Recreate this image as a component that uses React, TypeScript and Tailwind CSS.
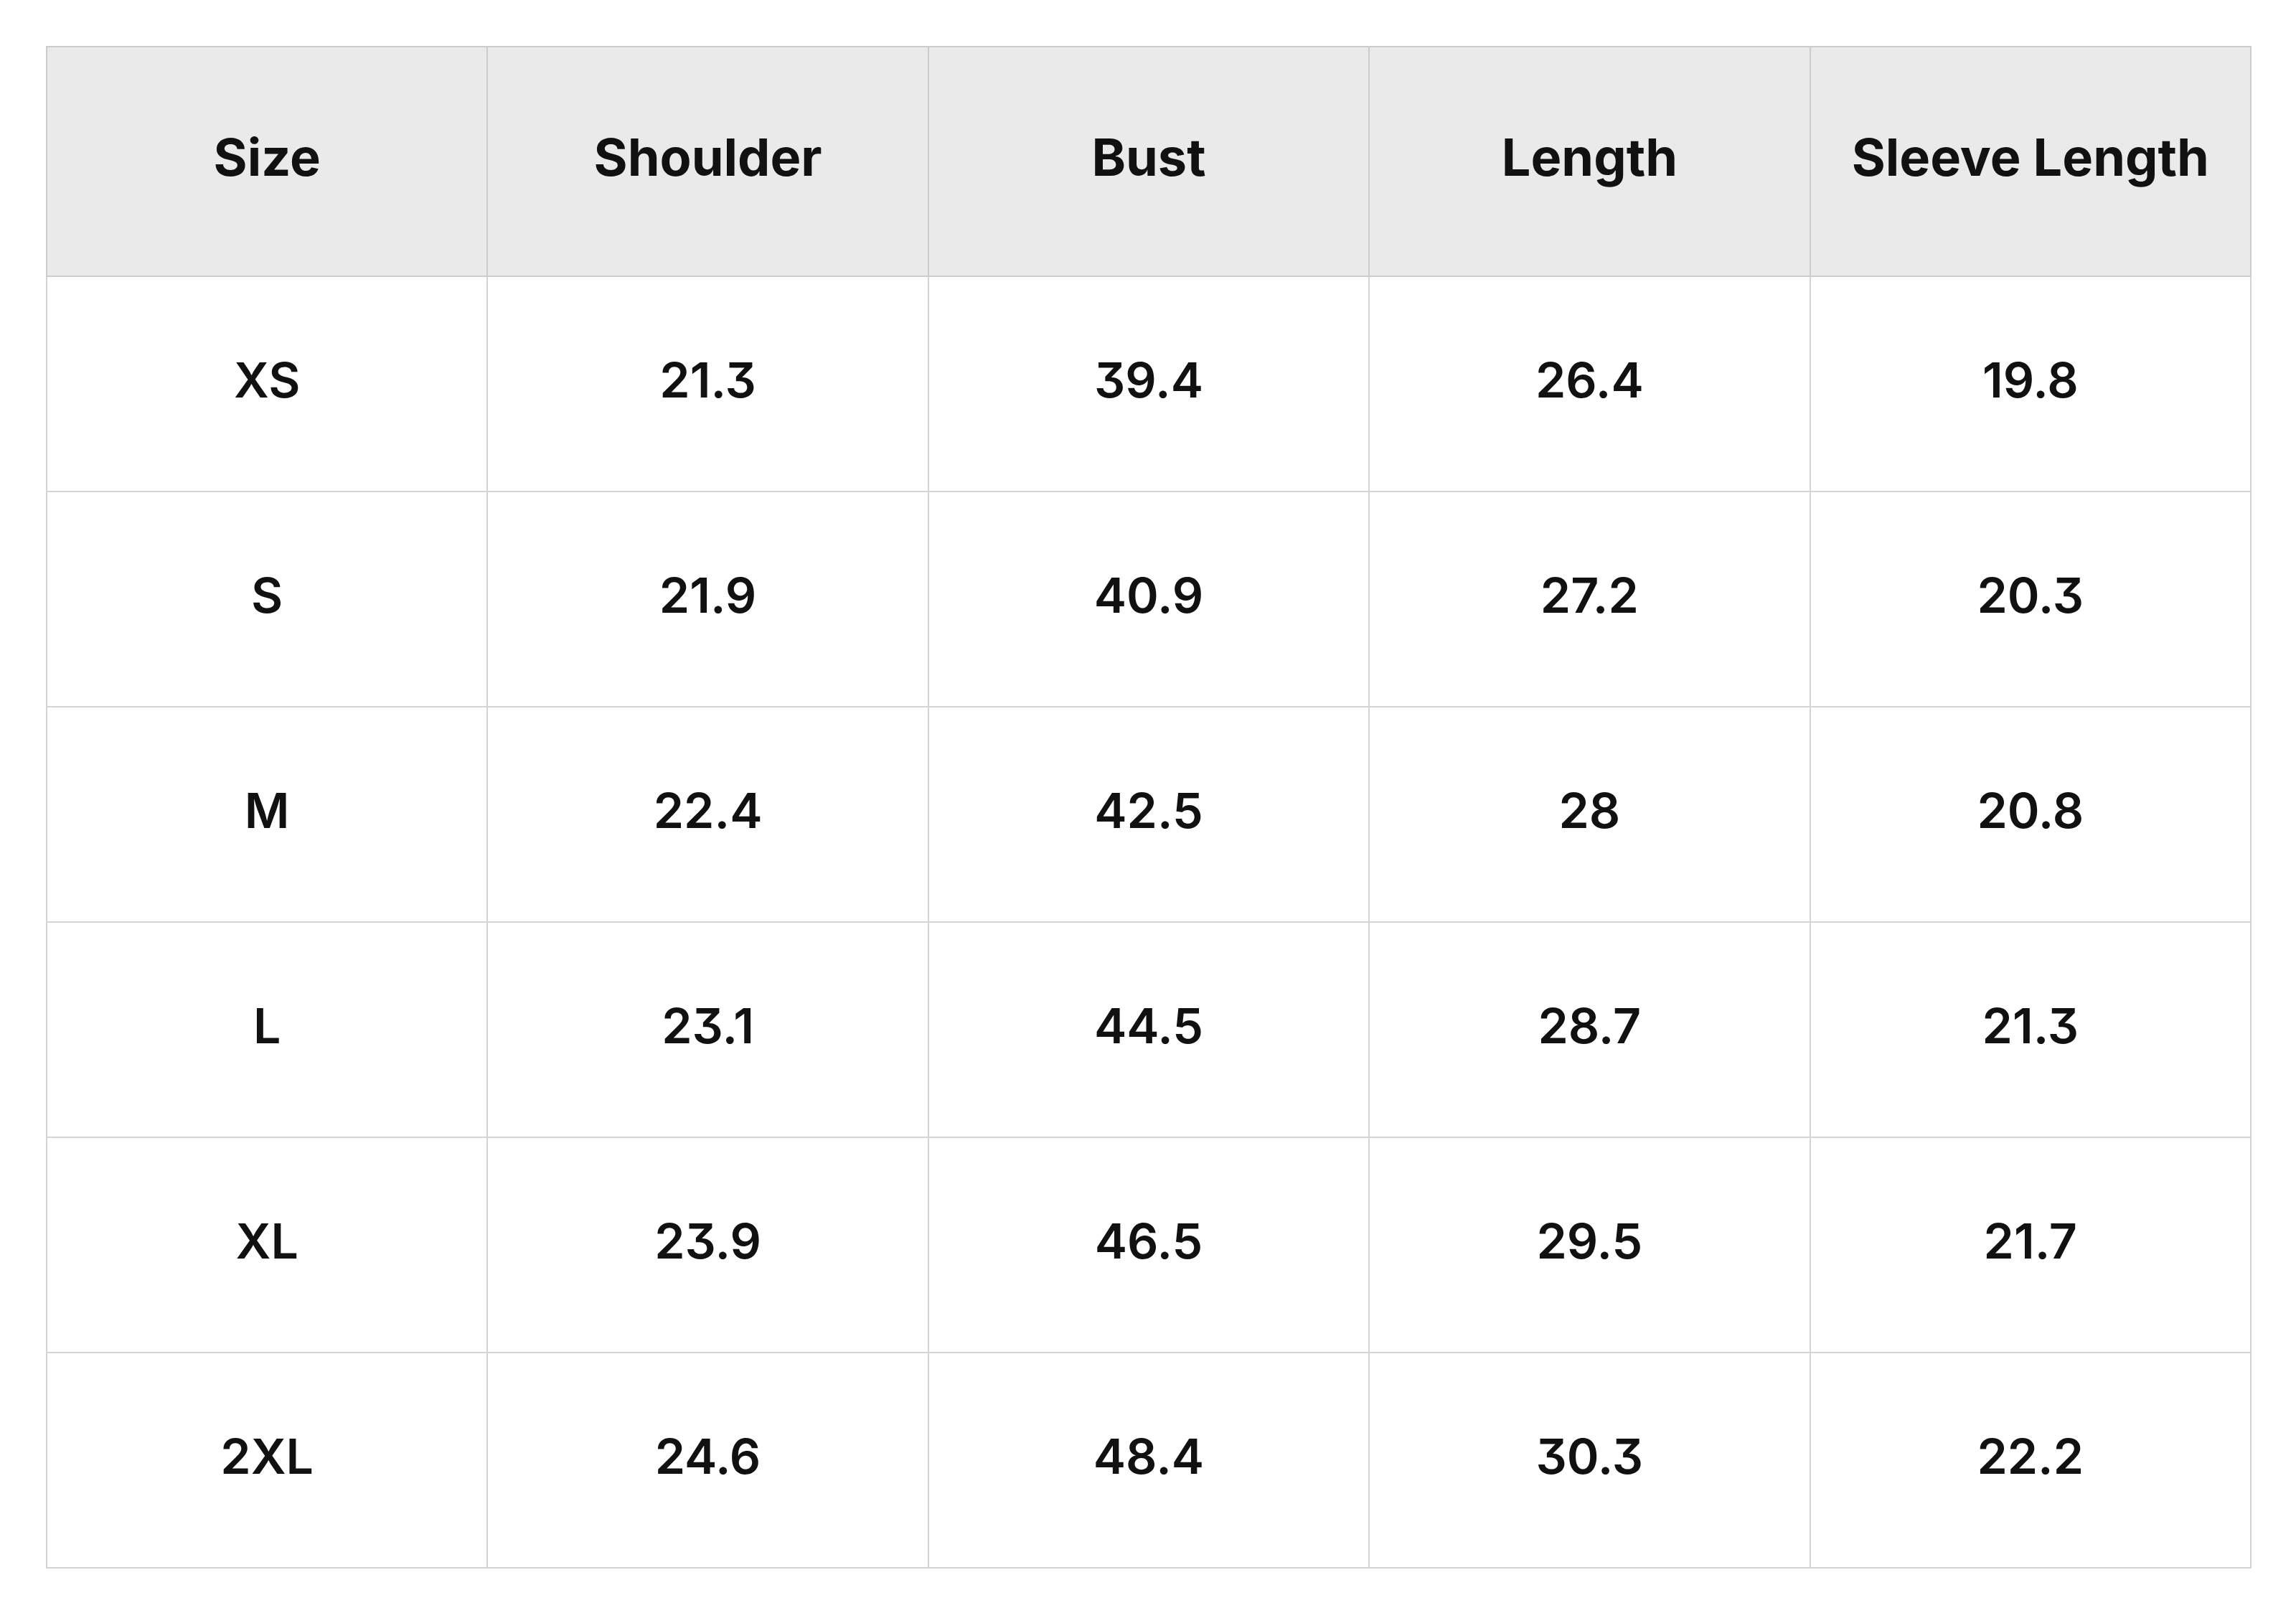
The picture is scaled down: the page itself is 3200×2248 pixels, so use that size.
const HEADERS = ["Size", "Shoulder", "Bust", "Length", "Sleeve Length"];

const ROWS = [
  ["XS", "21.3", "39.4", "26.4", "19.8"],
  ["S", "21.9", "40.9", "27.2", "20.3"],
  ["M", "22.4", "42.5", "28", "20.8"],
  ["L", "23.1", "44.5", "28.7", "21.3"],
  ["XL", "23.9", "46.5", "29.5", "21.7"],
  ["2XL", "24.6", "48.4", "30.3", "22.2"],
];

export default function App() {
  return (
    <div className="min-h-screen bg-white p-16 font-['Inter',sans-serif] text-[#111111]">
      <table className="w-[3074px] table-fixed border-collapse border-2 border-[#cccccc]">
        <thead>
          <tr className="bg-[#eaeaea]">
            {HEADERS.map((h) => (
              <th
                key={h}
                className="h-[320px] border-2 border-[#cccccc] pb-3 text-center text-[72px] font-bold"
              >
                {h}
              </th>
            ))}
          </tr>
        </thead>
        <tbody>
          {ROWS.map((row) => (
            <tr key={row[0]}>
              {row.map((cell, i) => (
                <td
                  key={i}
                  className="h-[300px] border-2 border-[#d4d4d4] pb-3 text-center text-[68px] font-semibold [font-feature-settings:'cv09']"
                >
                  {cell}
                </td>
              ))}
            </tr>
          ))}
        </tbody>
      </table>
    </div>
  );
}
